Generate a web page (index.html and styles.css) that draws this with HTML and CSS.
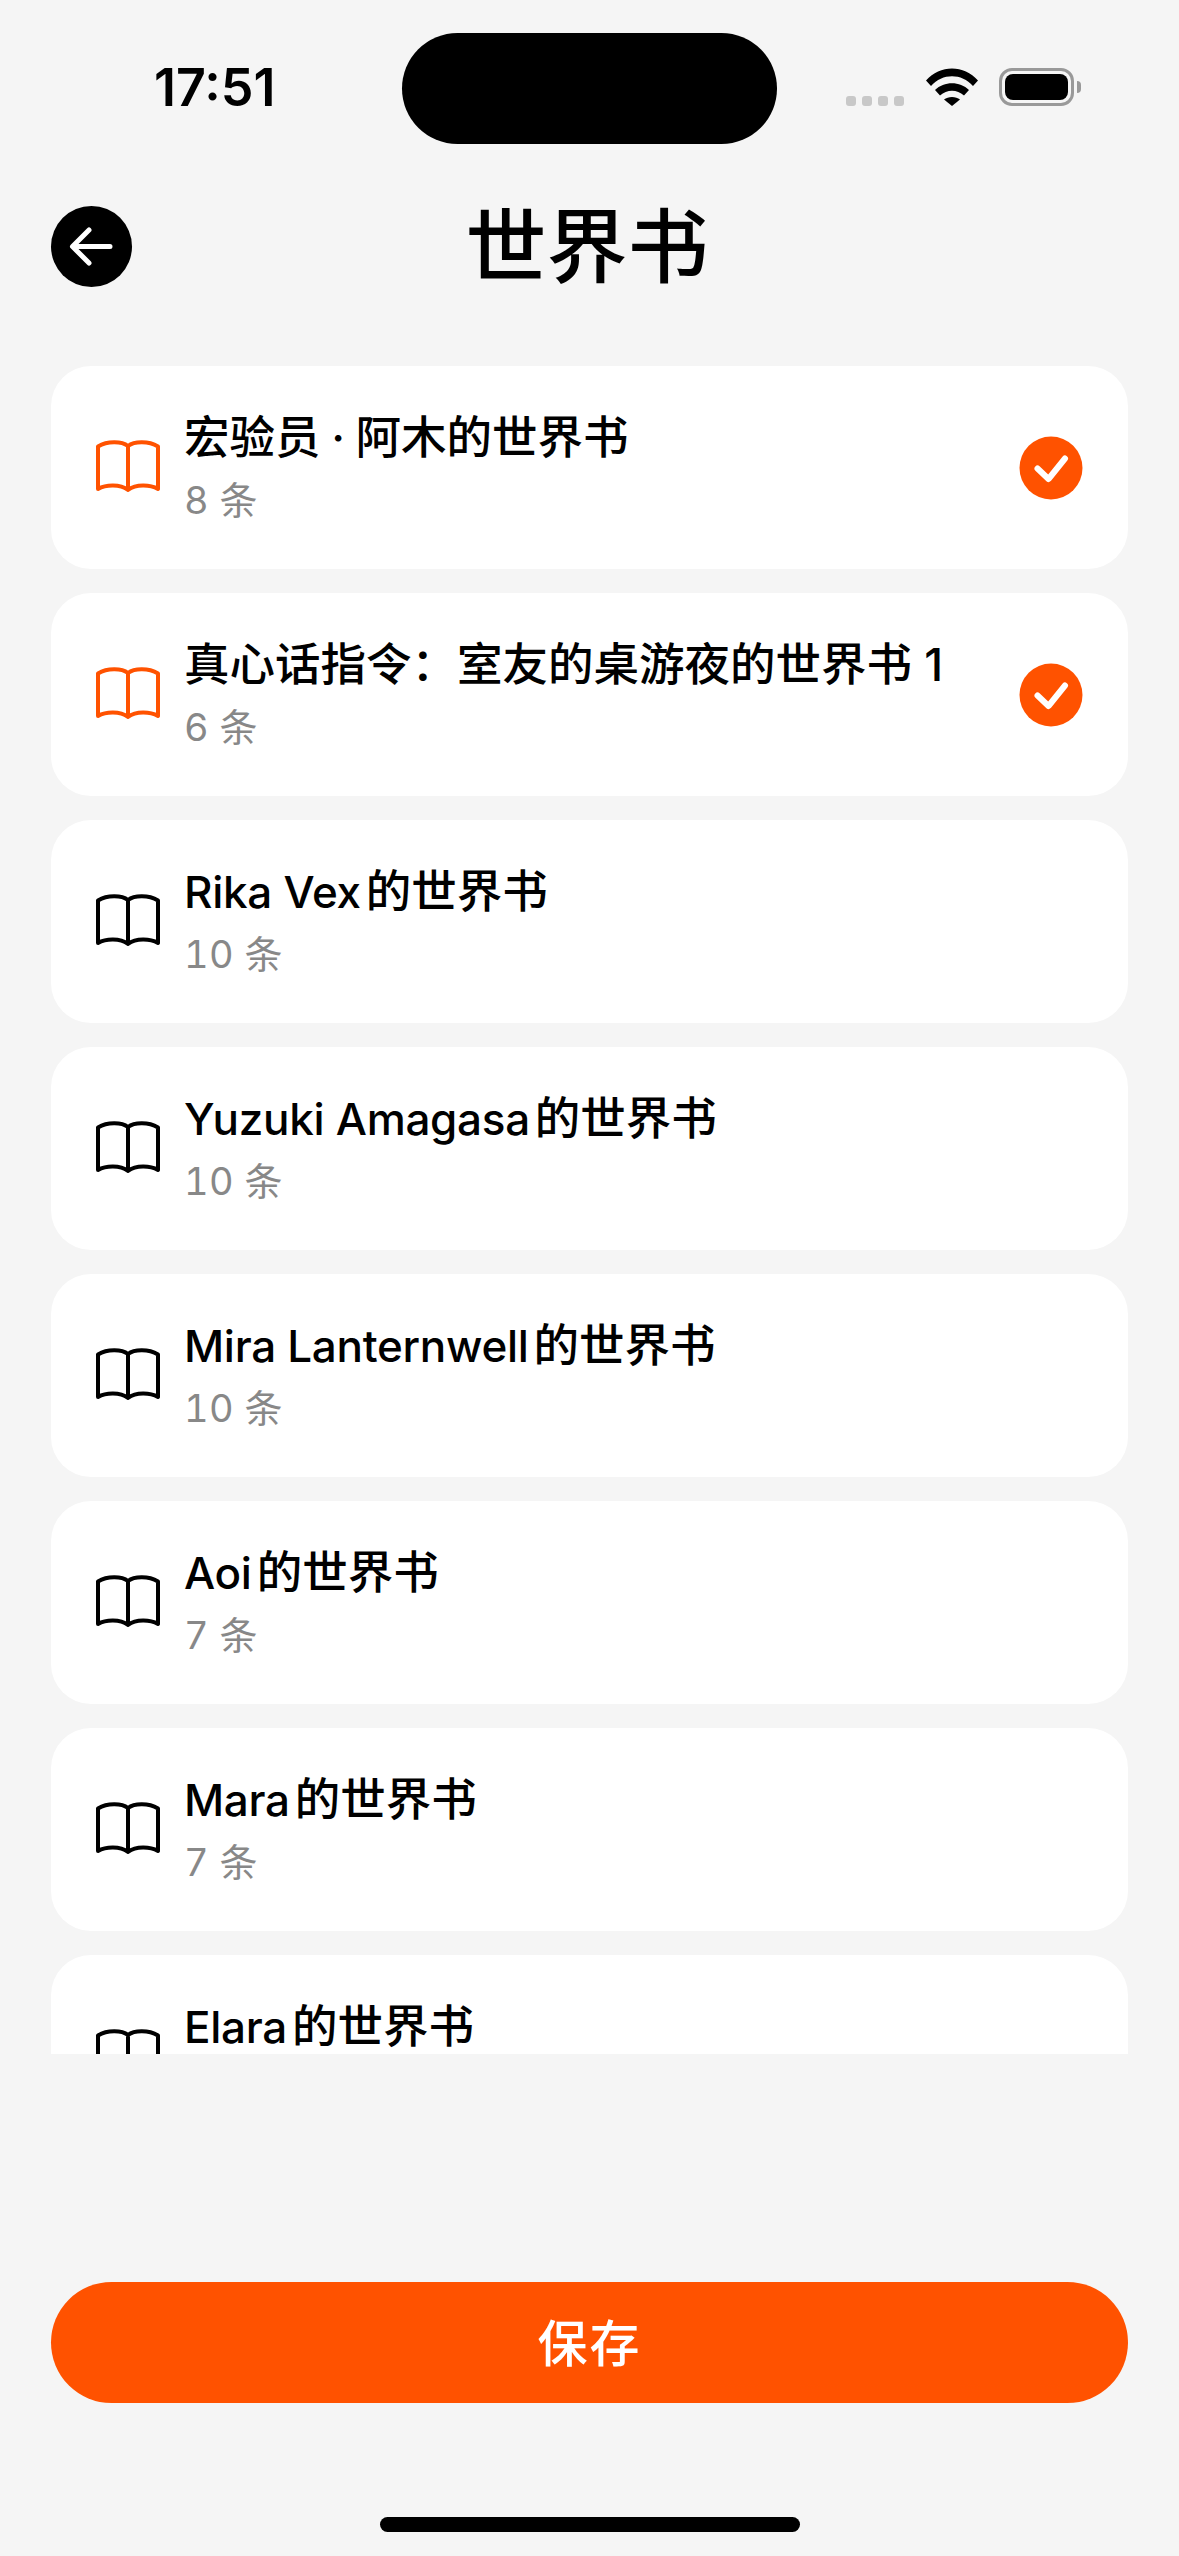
FILE: index.html
```html
<!DOCTYPE html>
<html lang="zh-CN">

<head>
    <meta charset="UTF-8">
    <meta name="viewport" content="width=device-width, initial-scale=1.0">
    <title>世界书</title>
    <link rel="stylesheet" href="styles.css">
</head>

<body>
    <svg class="icon-defs" width="0" height="0">
        <symbol id="book" viewBox="0 0 64 52">
            <path d="M32 6C26 1.500 12 0.500 2 6.500V49C10 44.500 24 44 32 50C40 44 54 44.500 62 49V6.500C52 0.500 38 1.500 32 6ZM32 6V50" fill="none" stroke="currentColor" stroke-width="4" stroke-linejoin="round" />
        </symbol>
        <symbol id="check" viewBox="0 0 64 64">
            <circle cx="32" cy="32" r="31.500" fill="#ff5200" />
            <path d="M18.500 32.500L29.500 43L46 22.500" fill="none" stroke="#fff" stroke-width="6" stroke-linecap="round" stroke-linejoin="round" />
        </symbol>
    </svg>

    <div class="screen">
        <div class="status-bar">
            <span class="time">17:51</span>
            <div class="island"></div>
            <div class="status-icons">
                <div class="signal">
                    <span></span><span></span><span></span><span></span>
                </div>
                <svg class="wifi" viewBox="0 0 52 38">
                    <path d="M0 12.500C14 -3.500 38 -3.500 52 12.500L47 18C35.500 5 16.500 5 5 18Z" />
                    <path d="M9 22C18 13 34 13 43 22L38 27.500C31 21 21 21 14 27.500Z" />
                    <path d="M18 31.500C22 28 30 28 34 31.500L26 38Z" />
                </svg>
                <div class="battery">
                    <div class="battery-fill"></div>
                </div>
                <div class="battery-cap"></div>
            </div>
        </div>

        <div class="page-header">
            <button class="back-btn" type="button">
                <svg viewBox="0 0 81 81">
                    <path d="M59 40.500H22M38 24L21.500 40.500L38 57" fill="none" stroke="#fff" stroke-width="5" stroke-linecap="round" stroke-linejoin="round" />
                </svg>
            </button>
            <h1 class="page-title">世界书</h1>
        </div>

        <div class="book-list">
            <div class="book-card selected">
                <svg class="book-icon"><use href="#book" /></svg>
                <div class="book-text">
                    <div class="book-name tight">宏验员 · 阿木的世界书</div>
                    <div class="book-count">8 条</div>
                </div>
                <svg class="check-icon"><use href="#check" /></svg>
            </div>
            <div class="book-card selected">
                <svg class="book-icon"><use href="#book" /></svg>
                <div class="book-text">
                    <div class="book-name">真心话指令：室友的桌游夜的世界书 1</div>
                    <div class="book-count">6 条</div>
                </div>
                <svg class="check-icon"><use href="#check" /></svg>
            </div>
            <div class="book-card">
                <svg class="book-icon"><use href="#book" /></svg>
                <div class="book-text">
                    <div class="book-name"><span class="latin">Rika Vex</span>的世界书</div>
                    <div class="book-count">10 条</div>
                </div>
            </div>
            <div class="book-card">
                <svg class="book-icon"><use href="#book" /></svg>
                <div class="book-text">
                    <div class="book-name"><span class="latin">Yuzuki Amagasa</span>的世界书</div>
                    <div class="book-count">10 条</div>
                </div>
            </div>
            <div class="book-card">
                <svg class="book-icon"><use href="#book" /></svg>
                <div class="book-text">
                    <div class="book-name"><span class="latin">Mira Lanternwell</span>的世界书</div>
                    <div class="book-count">10 条</div>
                </div>
            </div>
            <div class="book-card">
                <svg class="book-icon"><use href="#book" /></svg>
                <div class="book-text">
                    <div class="book-name"><span class="latin">Aoi</span>的世界书</div>
                    <div class="book-count">7 条</div>
                </div>
            </div>
            <div class="book-card">
                <svg class="book-icon"><use href="#book" /></svg>
                <div class="book-text">
                    <div class="book-name"><span class="latin">Mara</span>的世界书</div>
                    <div class="book-count">7 条</div>
                </div>
            </div>
            <div class="book-card">
                <svg class="book-icon"><use href="#book" /></svg>
                <div class="book-text">
                    <div class="book-name"><span class="latin">Elara</span>的世界书</div>
                    <div class="book-count">7 条</div>
                </div>
            </div>
        </div>

        <div class="save-wrap">
            <button class="save-btn" type="button">保存</button>
        </div>
        <div class="home-bar"></div>
    </div>
</body>

</html>
```

FILE: styles.css
```css
* {
    box-sizing: border-box;
}

html,
body {
    margin: 0;
    padding: 0;
    background-color: #f5f5f5;
}

body {
    font-family: Inter, "Noto Sans CJK SC", sans-serif;
    color: #000;
}

.icon-defs {
    position: absolute;
}

.screen {
    width: 1179px;
    height: 2556px;
    overflow: hidden;
    padding: 0 51px;
}

/* status bar */
.status-bar {
    display: flex;
    align-items: flex-start;
    height: 144px;
    padding-top: 33px;
}

.time {
    width: 351px;
    padding: 27px 0 0 103px;
    font-family: Inter, sans-serif;
    font-size: 52px;
    line-height: 56px;
    font-weight: 600;
    letter-spacing: 0;
}

.island {
    width: 375px;
    height: 111px;
    background-color: #000;
    border-radius: 56px;
}

.status-icons {
    display: flex;
    align-items: flex-start;
    padding: 35px 0 0 69px;
}

.signal {
    display: flex;
    gap: 6px;
    margin-top: 28px;
}

.signal span {
    width: 10px;
    height: 10px;
    background-color: #c8c8c8;
    border-radius: 3px;
}

.wifi {
    width: 52px;
    height: 38px;
    margin-left: 22px;
}

.battery {
    width: 75px;
    height: 38px;
    margin-left: 21px;
    padding: 3px;
    border: 3px solid #999;
    border-radius: 13px;
}

.battery-fill {
    width: 100%;
    height: 100%;
    background-color: #000;
    border-radius: 8px;
}

.battery-cap {
    width: 4px;
    height: 12px;
    margin: 13px 0 0 3px;
    background-color: #999;
    border-radius: 0 4px 4px 0;
}

/* header */
.page-header {
    position: relative;
    display: flex;
    justify-content: center;
    align-items: center;
    height: 81px;
    margin-top: 62px;
    margin-bottom: 79px;
}

.back-btn {
    position: absolute;
    left: 0;
    top: 0;
    width: 81px;
    height: 81px;
    padding: 0;
    border: 0;
    border-radius: 50%;
    background-color: #000;
}

.back-btn svg {
    display: block;
    width: 81px;
    height: 81px;
}

.page-title {
    margin: 0 5px 0 0;
    font-size: 81px;
    line-height: 90px;
    font-weight: 500;
}

/* list */
.book-list {
    display: flex;
    flex-direction: column;
    gap: 24px;
    height: 1688px;
    overflow: hidden;
}

.book-card {
    display: flex;
    align-items: center;
    flex-shrink: 0;
    height: 203px;
    padding: 0 45px;
    background-color: #fff;
    border-radius: 40px;
}

.book-icon {
    flex-shrink: 0;
    width: 64px;
    height: 52px;
    margin-bottom: 4px;
    color: #000;
}

.selected .book-icon {
    color: #ff5200;
}

.book-text {
    flex: 1;
    margin-left: 24px;
    padding-bottom: 3px;
}

.book-name {
    font-size: 45.500px;
    line-height: 58px;
    font-weight: 500;
}

.tight {
    word-spacing: -1.500px;
}

.latin {
    margin-right: 5px;
    font-size: 44px;
    letter-spacing: -0.300px;
}

.book-count {
    margin-top: 9px;
    font-size: 38px;
    line-height: 48px;
    letter-spacing: 0.300px;
    font-variant-numeric: tabular-nums;
    color: #888;
}

.check-icon {
    flex-shrink: 0;
    width: 64px;
    height: 64px;
}

/* bottom */
.save-wrap {
    padding-top: 228px;
}

.save-btn {
    display: block;
    width: 100%;
    height: 121px;
    padding: 0 0 5px;
    border: 0;
    border-radius: 61px;
    background-color: #ff5200;
    color: #fff;
    font-family: Inter, "Noto Sans CJK SC", sans-serif;
    font-size: 50px;
    font-weight: 500;
    letter-spacing: 2px;
}

.home-bar {
    width: 420px;
    height: 15px;
    margin: 114px auto 0;
    background-color: #000;
    border-radius: 8px;
}
```
